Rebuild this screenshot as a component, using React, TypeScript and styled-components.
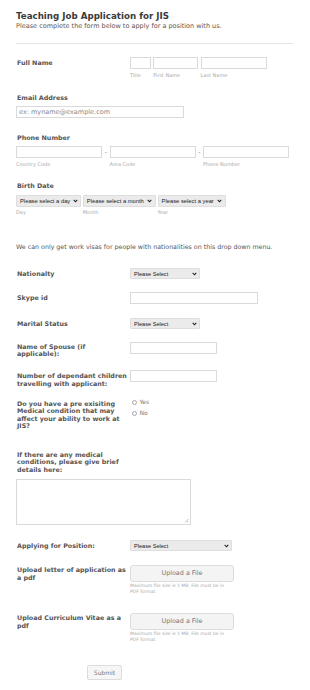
import React from 'react'
import styled, { createGlobalStyle } from 'styled-components'

const GlobalStyle = createGlobalStyle`
  html, body {
    margin: 0;
    padding: 0;
    background: #fff;
  }
  body {
    font-family: 'DejaVu Sans', Verdana, sans-serif;
  }
`

// page shell
const Page = styled.div`
  width: 310px;
  padding: 10px 17px 10px 16px;
  box-sizing: border-box;
  color: #555;
`

const Title = styled.h1`
  margin: 0;
  font-size: 8.7px;
  line-height: 12px;
  font-weight: bold;
  color: #3a3a3a;
`

const Subtitle = styled.p`
  margin: 0;
  font-size: 6.5px;
  line-height: 9px;
  color: #5e544d;
`

const Divider = styled.hr`
  margin: 12px 0 0;
  border: 0;
  border-top: 1px solid #e6e6e6;
`

// a field laid out label | control
const Row = styled.div<{ $top: number; $center?: boolean }>`
  display: flex;
  align-items: ${(p) => (p.$center ? 'center' : 'flex-start')};
  margin-top: ${(p) => p.$top}px;
`

// a field laid out label above control
const Stack = styled.div<{ $top: number }>`
  display: flex;
  flex-direction: column;
  align-items: flex-start;
  margin-top: ${(p) => p.$top}px;
`

const Label = styled.div<{ $pad?: number }>`
  width: 114px;
  flex: none;
  box-sizing: border-box;
  padding-left: 1px;
  padding-top: ${(p) => p.$pad ?? 0}px;
  font-size: 6.35px;
  line-height: 7.5px;
  font-weight: bold;
  color: #555;
`

const TopLabel = styled(Label)<{ $gap?: number }>`
  margin-bottom: ${(p) => p.$gap ?? 5}px;
`

const Controls = styled.div<{ $gap?: number }>`
  display: flex;
  align-items: flex-start;
  gap: ${(p) => p.$gap ?? 0}px;
`

const Group = styled.div`
  display: flex;
  flex-direction: column;
`

const Input = styled.div<{ $w: number }>`
  width: ${(p) => p.$w}px;
  height: 12px;
  box-sizing: border-box;
  border: 1px solid #dadada;
  background: #fff;
  font-size: 6.5px;
  line-height: 10px;
  padding-left: 2px;
  color: #888;
  white-space: nowrap;
`

const Sub = styled.span`
  margin-top: 2.5px;
  font-size: 5px;
  line-height: 6px;
  color: #a9a9a9;
`

const Dash = styled.span`
  width: 7.5px;
  text-align: center;
  font-size: 6px;
  line-height: 12px;
  color: #777;
`

const SelectBox = styled.div<{ $w: number; $h: number; $fs: number }>`
  width: ${(p) => p.$w}px;
  height: ${(p) => p.$h}px;
  box-sizing: border-box;
  display: flex;
  align-items: center;
  justify-content: space-between;
  gap: 2px;
  padding: 0 2.5px 0 3px;
  background: #ebebeb;
  border: 1px solid #dedede;
  border-radius: 1px;
  font-family: 'Liberation Sans', Arial, sans-serif;
  font-size: ${(p) => p.$fs}px;
  color: #222;
  white-space: nowrap;
`

const Chevron = () => (
  <svg width="5" height="4" viewBox="0 0 5 4" style={{ flex: 'none' }}>
    <path d="M0.7 0.9 L2.5 2.8 L4.3 0.9" stroke="#222" strokeWidth="1.1" fill="none" />
  </svg>
)

const Select = ({ w, h = 11, fs = 5.6, text }: { w: number; h?: number; fs?: number; text: string }) => (
  <SelectBox $w={w} $h={h} $fs={fs}>
    <span>{text}</span>
    <Chevron />
  </SelectBox>
)

const Note = styled.p`
  margin: 27px 0 0;
  font-size: 6.3px;
  line-height: 9px;
  color: #555;
`

const Radios = styled.div`
  display: flex;
  flex-direction: column;
  gap: 3px;
  padding-left: 1.5px;
`

const RadioItem = styled.label`
  display: flex;
  align-items: center;
  gap: 3px;
  font-size: 6px;
  line-height: 8px;
  color: #777;
`

const Circle = styled.span`
  width: 5px;
  height: 5px;
  box-sizing: border-box;
  border: 1px solid #a8a8a8;
  border-radius: 50%;
  background: #fff;
`

const TextArea = styled.div`
  width: 175px;
  height: 46px;
  box-sizing: border-box;
  border: 1px solid #dadada;
  position: relative;
`

const Grip = styled.svg`
  position: absolute;
  right: 1px;
  bottom: 1px;
`

const UploadButton = styled.div`
  width: 104px;
  height: 17px;
  box-sizing: border-box;
  border: 1px solid #dcdcdc;
  border-radius: 3px;
  background: #f4f4f4;
  display: flex;
  align-items: center;
  justify-content: center;
  font-size: 6.4px;
  color: #777;
`

const Help = styled.span`
  margin-top: 1px;
  width: 100px;
  font-size: 4.5px;
  line-height: 6px;
  color: #aaa;
`

const SubmitRow = styled.div`
  display: flex;
  margin-top: 22.5px;
  padding-left: 71px;
`

const SubmitButton = styled.button`
  width: 35px;
  height: 14.5px;
  padding: 0;
  border: 1px solid #dcdcdc;
  border-radius: 2px;
  background: #f6f6f6;
  font-family: 'DejaVu Sans', Verdana, sans-serif;
  font-size: 6px;
  color: #777;
`

const Upload = () => (
  <Group>
    <UploadButton>Upload a File</UploadButton>
    <Help>Maximum file size is 1 MB. File must be in PDF format.</Help>
  </Group>
)

export default function App() {
  return (
    <>
      <GlobalStyle />
      <Page>
        <Title>Teaching Job Application for JIS</Title>
        <Subtitle>Please complete the form below to apply for a position with us.</Subtitle>
        <Divider />

        <Row $top={13}>
          <Label $pad={2}>Full Name</Label>
          <Controls $gap={2.3}>
            <Group>
              <Input $w={21} />
              <Sub>Title</Sub>
            </Group>
            <Group>
              <Input $w={45} />
              <Sub>First Name</Sub>
            </Group>
            <Group>
              <Input $w={66} />
              <Sub>Last Name</Sub>
            </Group>
          </Controls>
        </Row>

        <Stack $top={16}>
          <TopLabel>Email Address</TopLabel>
          <Input $w={168}>ex: myname@example.com</Input>
        </Stack>

        <Stack $top={15.5}>
          <TopLabel>Phone Number</TopLabel>
          <Controls>
            <Group>
              <Input $w={86} />
              <Sub>Country Code</Sub>
            </Group>
            <Dash>-</Dash>
            <Group>
              <Input $w={86} />
              <Sub>Area Code</Sub>
            </Group>
            <Dash>-</Dash>
            <Group>
              <Input $w={86} />
              <Sub>Phone Number</Sub>
            </Group>
          </Controls>
        </Stack>

        <Stack $top={15.5}>
          <TopLabel>Birth Date</TopLabel>
          <Controls $gap={1.8}>
            <Group>
              <Select w={65} h={12} fs={5.8} text="Please select a day" />
              <Sub>Day</Sub>
            </Group>
            <Group>
              <Select w={73} h={12} fs={5.8} text="Please select a month" />
              <Sub>Month</Sub>
            </Group>
            <Group>
              <Select w={68} h={12} fs={5.8} text="Please select a year" />
              <Sub>Year</Sub>
            </Group>
          </Controls>
        </Stack>

        <Note>We can only get work visas for people with nationalities on this drop down menu.</Note>

        <Row $top={17} $center>
          <Label>Nationalty</Label>
          <Select w={70} text="Please Select" />
        </Row>

        <Row $top={13} $center>
          <Label>Skype id</Label>
          <Input $w={128} />
        </Row>

        <Row $top={14} $center>
          <Label>Marital Status</Label>
          <Select w={70} text="Please Select" />
        </Row>

        <Row $top={13}>
          <Label $pad={0.5}>
            Name of Spouse (if
            <br />
            applicable):
          </Label>
          <Input $w={87} />
        </Row>

        <Row $top={12.5}>
          <Label $pad={2}>Number of dependant children travelling with applicant:</Label>
          <Input $w={87} />
        </Row>

        <Row $top={11}>
          <Label $pad={1.5}>Do you have a pre exisiting Medical condition that may affect your ability to work at JIS?</Label>
          <Radios>
            <RadioItem>
              <Circle />
              Yes
            </RadioItem>
            <RadioItem>
              <Circle />
              No
            </RadioItem>
          </Radios>
        </Row>

        <Stack $top={21}>
          <TopLabel $gap={6}>If there are any medical conditions, please give brief details here:</TopLabel>
          <TextArea>
            <Grip width="5" height="5" viewBox="0 0 5 5">
              <path d="M4.5 1 L1 4.5 M4.5 3 L3 4.5" stroke="#aaa" strokeWidth="0.7" />
            </Grip>
          </TextArea>
        </Stack>

        <Row $top={15} $center>
          <Label>Applying for Position:</Label>
          <Select w={102} text="Please Select" />
        </Row>

        <Row $top={13.5}>
          <Label $pad={1.5}>Upload letter of application as a pdf</Label>
          <Upload />
        </Row>

        <Row $top={18}>
          <Label $pad={1.5}>Upload Curriculum Vitae as a pdf</Label>
          <Upload />
        </Row>

        <SubmitRow>
          <SubmitButton>Submit</SubmitButton>
        </SubmitRow>
      </Page>
    </>
  )
}
